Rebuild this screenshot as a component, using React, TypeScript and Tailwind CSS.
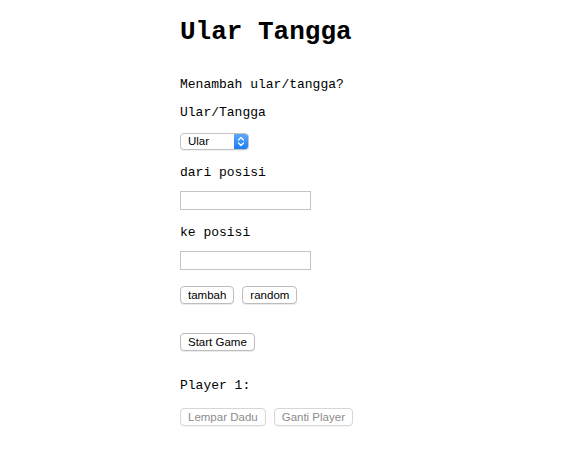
import React from "react";

function Btn({ children, disabled }: { children: React.ReactNode; disabled?: boolean }) {
  return (
    <button
      disabled={disabled}
      className={
        disabled
          ? "h-[18px] rounded-[4px] border border-[#d6d6d6] bg-white px-[7px] font-['Liberation_Sans'] text-[11.5px] leading-[16px] text-[#8c8c8c] shadow-[0_1px_0_rgba(0,0,0,0.04)]"
          : "h-[18px] rounded-[4px] border border-[#bdbdbd] bg-white px-[7px] font-['Liberation_Sans'] text-[11.5px] leading-[16px] text-black shadow-[0_1px_0_rgba(0,0,0,0.08)]"
      }
    >
      {children}
    </button>
  );
}

export default function App() {
  return (
    <div className="flex min-h-[451px] flex-col items-start bg-white pl-[180px] font-['Liberation_Mono',monospace] text-[13px] text-black">
      <h1 className="mt-[17px] text-[26px] font-bold leading-[30px]">Ular Tangga</h1>
      <p className="mt-[30px] leading-[15px]">Menambah ular/tangga?</p>
      <p className="mt-[13px] leading-[15px]">Ular/Tangga</p>
      <div className="mt-[13px] flex h-[17px] w-[69px] overflow-hidden rounded-[4px] border border-[#c2c2c2] bg-white shadow-[0_1px_0_rgba(0,0,0,0.06)]">
        <span className="flex-1 pl-[7px] font-['Liberation_Sans',sans-serif] text-[11.5px] leading-[15px]">Ular</span>
        <span className="flex w-[14px] items-center justify-center bg-gradient-to-b from-[#5aa8ff] to-[#1a7cf5]">
          <svg width="8" height="11" viewBox="0 0 8 11" fill="none" stroke="white" strokeWidth="1.3" strokeLinecap="round" strokeLinejoin="round">
            <path d="M1.5 4 L4 1.5 L6.5 4" />
            <path d="M1.5 7 L4 9.5 L6.5 7" />
          </svg>
        </span>
      </div>
      <p className="mt-[15px] leading-[15px]">dari posisi</p>
      <input className="mt-[11px] h-[19px] w-[131px] border border-[#c4c4c4] bg-white outline-none" />
      <p className="mt-[15px] leading-[15px]">ke posisi</p>
      <input className="mt-[11px] h-[19px] w-[131px] border border-[#c4c4c4] bg-white outline-none" />
      <div className="mt-[16px] flex gap-[8px]">
        <Btn>tambah</Btn>
        <Btn>random</Btn>
      </div>
      <div className="mt-[29px]">
        <Btn>Start Game</Btn>
      </div>
      <p className="mt-[25px] leading-[15px]">Player 1:</p>
      <div className="mt-[15px] flex gap-[8px]">
        <Btn disabled>Lempar Dadu</Btn>
        <Btn disabled>Ganti Player</Btn>
      </div>
    </div>
  );
}
